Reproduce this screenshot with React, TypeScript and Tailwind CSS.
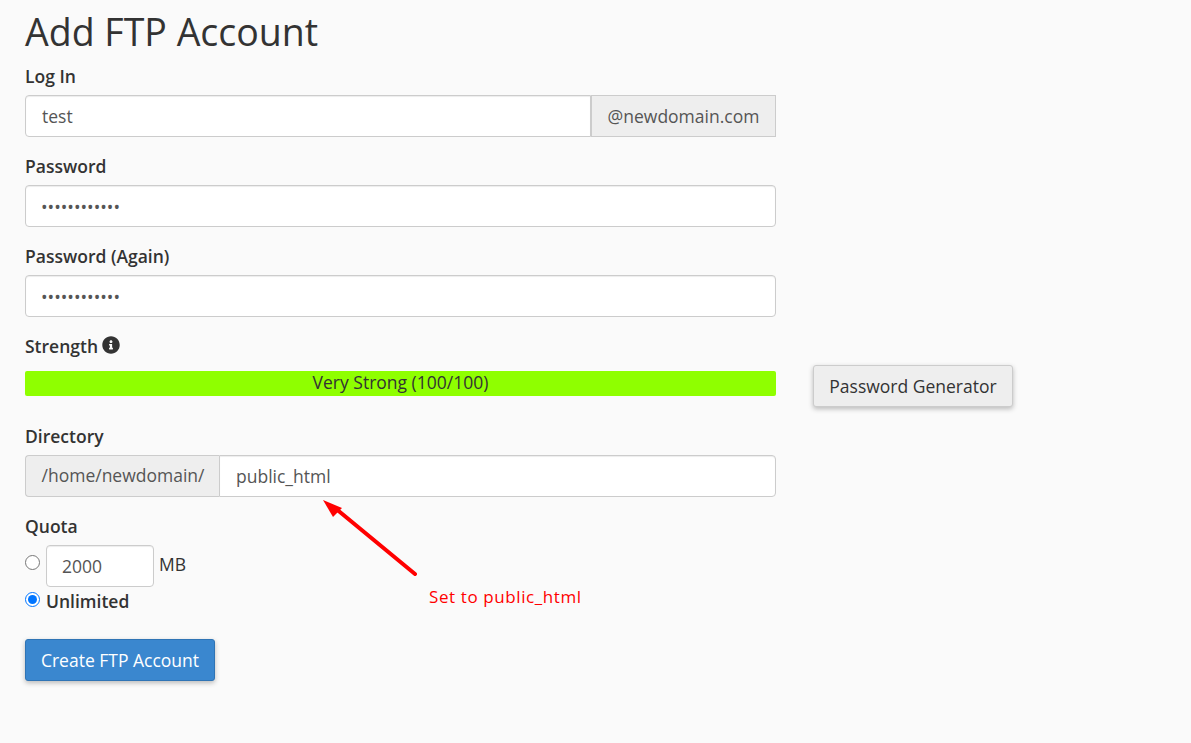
import React from 'react';
import { FaInfoCircle } from 'react-icons/fa';

const inputClass =
  'h-[42px] min-w-0 bg-white border border-[#ccc] px-[16px] text-[17.5px] text-[#555] outline-none shadow-[inset_0_1px_1px_rgba(0,0,0,0.075)]';

const labelClass = 'block h-[24px] mb-[7px] text-[17.5px] leading-[24px] font-semibold text-[#333]';

export default function App() {
  return (
    <div className="relative min-h-[743px] bg-[#fafafa] pl-[25px] font-['Open_Sans',sans-serif] text-[#333]">
      <h1 className="h-[64px] pt-[8px] text-[37.5px] leading-[48px] font-normal">Add FTP Account</h1>

      {/* Log in */}
      <div className="w-[751px] mb-[17px]">
        <label className={labelClass}>Log In</label>
        <div className="flex">
          <input className={`${inputClass} flex-1 rounded-l-[4px]`} defaultValue="test" />
          <span className="h-[42px] w-[185px] flex items-center justify-center border border-[#ccc] bg-[#eee] text-[17.5px] text-[#555]">
            @newdomain.com
          </span>
        </div>
      </div>

      {/* Passwords */}
      <div className="w-[751px] mb-[17px]">
        <label className={labelClass}>Password</label>
        <input type="password" className={`${inputClass} w-full rounded-[4px] pt-[2px] pl-[15px]`} defaultValue="............" />
      </div>
      <div className="w-[751px] mb-[17px]">
        <label className={labelClass}>Password (Again)</label>
        <input type="password" className={`${inputClass} w-full rounded-[4px] pt-[2px] pl-[15px]`} defaultValue="............" />
      </div>

      {/* Strength */}
      <div className="mb-[17px]">
        <label className={`${labelClass} flex items-center gap-[4px]`}>
          Strength <FaInfoCircle className="text-[#333] text-[18px] -mt-[3px]" />
        </label>
        <div className="flex items-start gap-[37px] h-[42px]">
          <div className="mt-[6px] h-[25px] w-[751px] rounded-[2px] bg-[#8fff00] text-center text-[17.5px] leading-[23px] text-[#333]">
            Very Strong (100/100)
          </div>
          <button className="h-[42px] w-[200px] rounded-[3px] border border-[#ccc] bg-[#eee] text-[17.5px] text-[#333] shadow-[0_2px_5px_rgba(0,0,0,0.26)]">
            Password Generator
          </button>
        </div>
      </div>

      {/* Directory */}
      <div className="w-[751px] mb-[17px]">
        <label className={labelClass}>Directory</label>
        <div className="flex">
          <span className="h-[42px] w-[194px] flex items-center justify-center rounded-l-[4px] border border-r-0 border-[#ccc] bg-[#eee] pb-[2px] pl-[1px] text-[17.5px] text-[#555]">
            /home/newdomain/
          </span>
          <input className={`${inputClass} flex-1 rounded-r-[4px]`} defaultValue="public_html" />
        </div>
      </div>

      {/* Quota */}
      <div>
        <label className={labelClass}>Quota</label>
        <div className="flex h-[42px] items-start">
          <input type="radio" name="quota" className="mt-[10px] h-[15px] w-[15px] m-0" />
          <input className={`${inputClass} ml-[6px] w-[108px] rounded-[4px] pl-[15px]`} defaultValue="2000" />
          <span className="ml-[5px] mt-[7px] text-[17.5px] leading-[24px]">MB</span>
        </div>
        <div className="mt-[2px] flex h-[24px] items-center">
          <input type="radio" name="quota" defaultChecked className="h-[15px] w-[15px] m-0 -mt-[4px]" />
          <span className="ml-[6px] text-[17.5px] leading-[24px] font-semibold">Unlimited</span>
        </div>
      </div>

      <button className="mt-[26px] h-[42px] w-[190px] rounded-[3px] border border-[#2f74b5] bg-[#3a87cf] text-[17.5px] text-white shadow-[0_2px_5px_rgba(0,0,0,0.26)]">
        Create FTP Account
      </button>

      {/* Annotation drawn over the form */}
      <svg className="absolute left-[300px] top-[480px]" width="140" height="110" viewBox="0 0 140 110">
        <line x1="115" y1="94" x2="35" y2="28" stroke="#ff0000" strokeWidth="4" strokeLinecap="round" />
        <polygon points="23,20 42,28 33,37" fill="#ff0000" />
      </svg>
      <span className="absolute left-[429px] top-[585px] text-[17px] leading-[24px] tracking-[0.6px] text-[#ff0000]">
        Set to public_html
      </span>
    </div>
  );
}
